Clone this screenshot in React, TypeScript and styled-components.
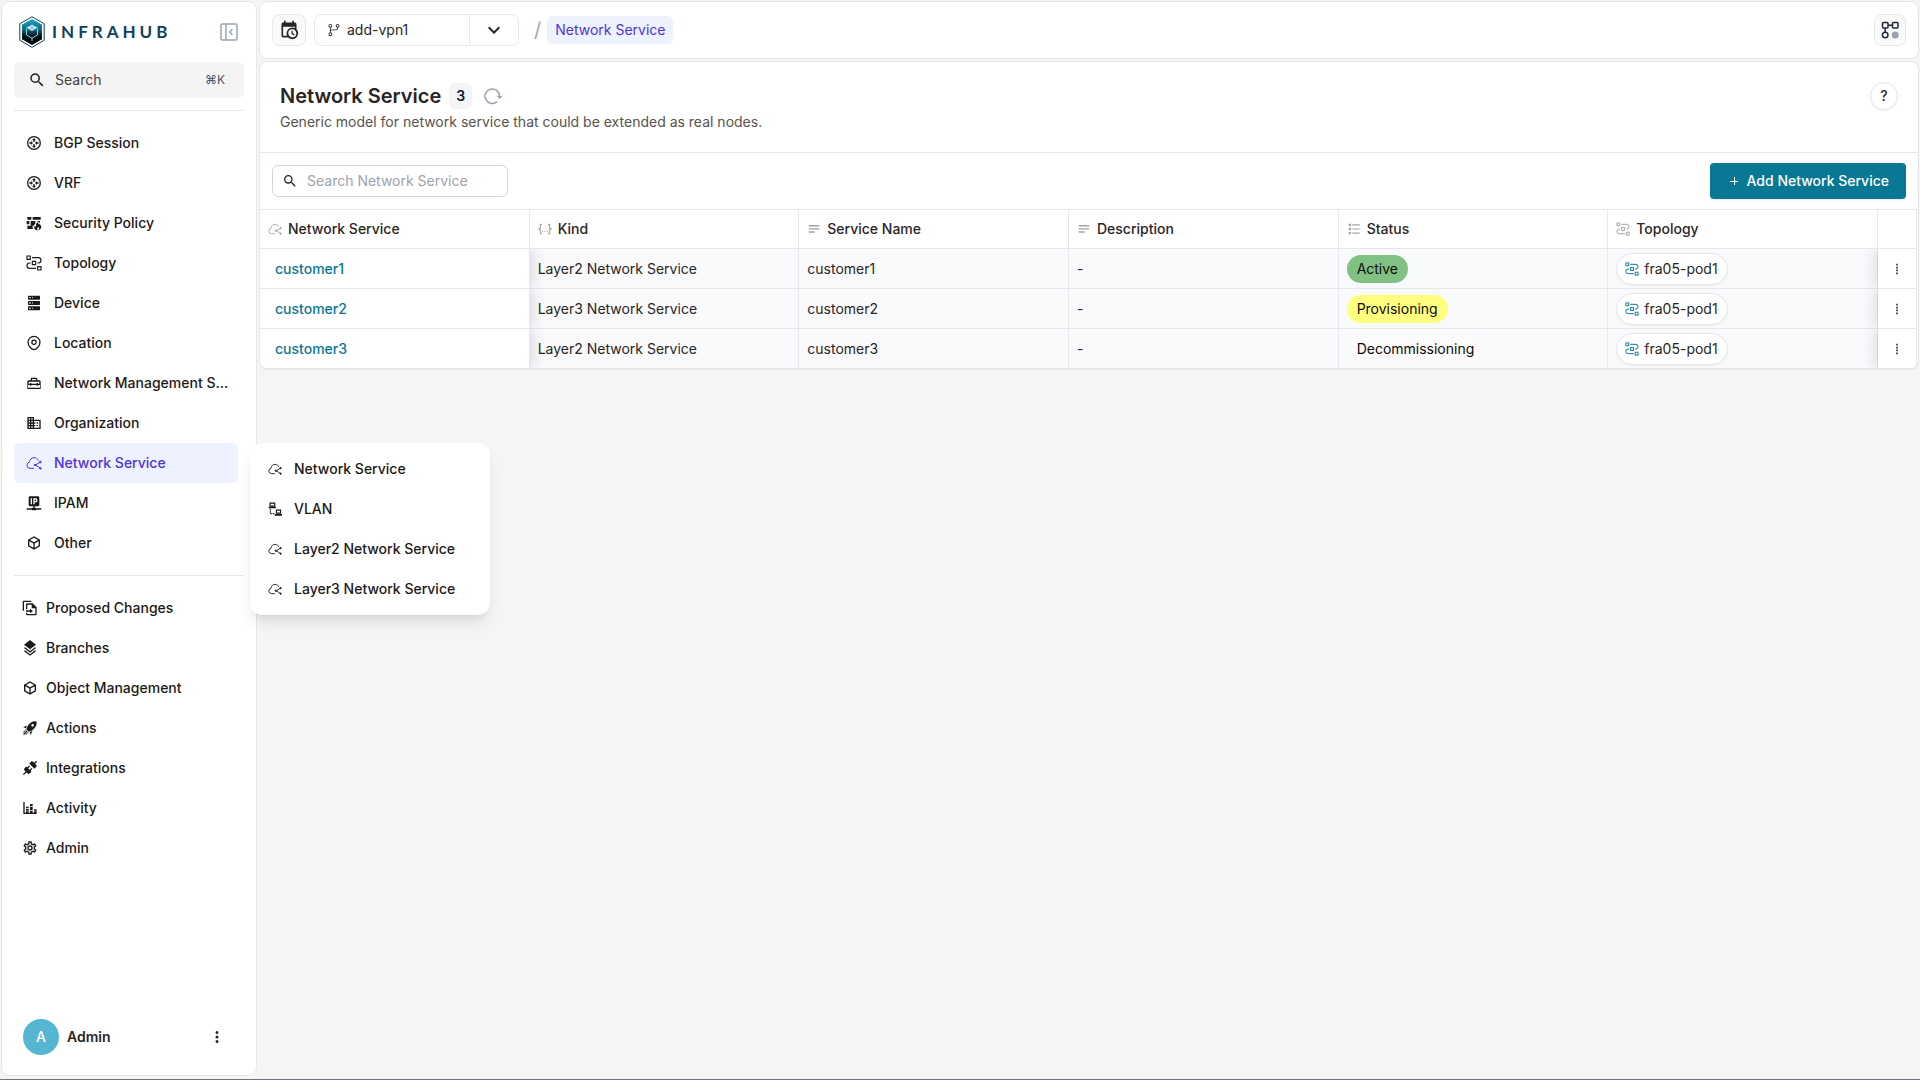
import React from "react";
import styled, { createGlobalStyle, css } from "styled-components";
import { GoGitBranch } from "react-icons/go";

const color = {
  page: "#f5f5f4",
  line: "#e5e7eb",
  ink: "#1c1917",
  text: "#292524",
  muted: "#9ca3af",
  accent: "#4f32e0",
  accentSoft: "#eef2ff",
  teal: "#087895",
};

const GlobalStyle = createGlobalStyle`
  *, *::before, *::after { box-sizing: border-box; }
  html, body, #root { height: 100%; }
  body {
    margin: 0;
    background: ${color.page};
    color: ${color.text};
    font: 400 14px/20px Inter, "Noto Sans", sans-serif;
  }
  button, input { font: inherit; color: inherit; }
  button { padding: 0; cursor: pointer; }
  a { color: inherit; text-decoration: none; }
  ul { list-style: none; margin: 0; padding: 0; }
  h1, p { margin: 0; }
`;

/* ---------- icons ---------- */

const Glyph = styled.svg<{ $size?: number }>`
  display: block;
  flex: none;
  width: ${(p) => p.$size ?? 16}px;
  height: ${(p) => p.$size ?? 16}px;
`;

type IconProps = { size?: number };

const solid = (d: string) =>
  function SolidIcon({ size }: IconProps) {
    return (
      <Glyph $size={size} viewBox="0 0 24 24" fill="currentColor" aria-hidden="true">
        <path d={d} fillRule="evenodd" />
      </Glyph>
    );
  };

const SearchIcon = solid(
  "M9.5 3A6.5 6.5 0 0 1 16 9.5c0 1.61-.59 3.09-1.56 4.23l.27.27h.79l5 5-1.5 1.5-5-5v-.79l-.27-.27A6.516 6.516 0 0 1 9.5 16 6.5 6.5 0 0 1 3 9.5 6.5 6.5 0 0 1 9.5 3m0 2C7 5 5 7 5 9.5S7 14 9.5 14 14 12 14 9.5 12 5 9.5 5"
);
const ChevronDownIcon = solid("M7.41 8.58 12 13.17l4.59-4.59L18 10l-6 6-6-6z");
const CubeIcon = solid(
  "M21 16.5c0 .38-.21.71-.53.88l-7.9 4.44c-.16.12-.36.18-.57.18s-.41-.06-.57-.18l-7.9-4.44A.99.99 0 0 1 3 16.5v-9c0-.38.21-.71.53-.88l7.9-4.44c.16-.12.36-.18.57-.18s.41.06.57.18l7.9 4.44c.32.17.53.5.53.88zM12 4.15 6.04 7.5 12 10.85l5.96-3.35zM5 15.91l6 3.38v-6.71L5 9.21zm14 0v-6.7l-6 3.37v6.71z"
);
const ServerIcon = solid(
  "M4 1h16a1 1 0 0 1 1 1v4a1 1 0 0 1-1 1H4a1 1 0 0 1-1-1V2a1 1 0 0 1 1-1m0 8h16a1 1 0 0 1 1 1v4a1 1 0 0 1-1 1H4a1 1 0 0 1-1-1v-4a1 1 0 0 1 1-1m0 8h16a1 1 0 0 1 1 1v4a1 1 0 0 1-1 1H4a1 1 0 0 1-1-1v-4a1 1 0 0 1 1-1M9 5h1V3H9zm0 8h1v-2H9zm0 8h1v-2H9zM5 3v2h2V3zm0 8v2h2v-2zm0 8v2h2v-2z"
);
const BuildingIcon = solid(
  "M18 15h-2v2h2zm0-4h-2v2h2zm2 8h-8v-2h2v-2h-2v-2h2v-2h-2V9h8zM10 7H8V5h2zm0 4H8V9h2zm0 4H8v-2h2zm0 4H8v-2h2zM6 7H4V5h2zm0 4H4V9h2zm0 4H4v-2h2zm0 4H4v-2h2zm6-12V3H2v18h20V7z"
);
const LayersIcon = solid(
  "M12 0 3 7l1.63 1.27L12 14l7.36-5.73L21 7zm7.37 10.8L12 16.54l-7.38-5.73L3 12.07l9 7 9-7zm0 4.67L12 21.2l-7.38-5.73L3 16.74l9 7 9-7z"
);
const RocketIcon = solid(
  "m13.13 22.19-1.63-3.83c1.57-.58 3.04-1.36 4.4-2.27zM5.64 12.5l-3.83-1.63 6.1-2.77C7 9.46 6.22 10.93 5.64 12.5M21.61 2.39S16.66.27 11 5.93c-2.19 2.19-3.5 4.6-4.35 6.71-.28.75-.09 1.57.46 2.13l2.13 2.12c.55.56 1.37.74 2.12.46A19.1 19.1 0 0 0 18.07 13c5.66-5.66 3.54-10.61 3.54-10.61m-7.07 7.07c-.78-.78-.78-2.05 0-2.83s2.05-.78 2.83 0c.77.78.78 2.05 0 2.83s-2.05.78-2.83 0M6.24 22l3.64-3.64c-.34-.09-.67-.24-.97-.45L4.83 22zM2 22h1.41l4.77-4.76-1.42-1.41L2 20.59zm0-2.83 4.09-4.08c-.21-.3-.36-.62-.45-.97L2 17.76z"
);
const PlugIcon = solid(
  "M21.4 7.5c.8.8.8 2.1 0 2.8l-2.8 2.8-7.8-7.8 2.8-2.8c.8-.8 2.1-.8 2.8 0l1.8 1.8 3-3 1.4 1.4-3 3zm-5.8 5.8-1.4-1.4-2.8 2.8-2.1-2.1 2.8-2.8-1.4-1.4-2.8 2.8-1.5-1.4-2.8 2.8c-.8.8-.8 2.1 0 2.8l1.8 1.8-4 4 1.4 1.4 4-4 1.8 1.8c.8.8 2.1.8 2.8 0l2.8-2.8-1.4-1.4z"
);
const ChartIcon = solid(
  "M22 21H2V3h2v16h2v-2h4v2h2v-3h4v3h2v-2h4zM18 14h4v2h-4zM12 6h4v3h-4zm4 9h-4v-5h4zM6 10h4v2H6zm4 6H6v-3h4z"
);
const CogIcon = solid(
  "M12 8a4 4 0 0 1 4 4 4 4 0 0 1-4 4 4 4 0 0 1-4-4 4 4 0 0 1 4-4m0 2a2 2 0 0 0-2 2 2 2 0 0 0 2 2 2 2 0 0 0 2-2 2 2 0 0 0-2-2m-2 12c-.25 0-.46-.18-.5-.42l-.37-2.65c-.63-.25-1.17-.59-1.69-.99l-2.49 1.01c-.22.08-.49 0-.61-.22l-2-3.46a.493.493 0 0 1 .12-.64l2.11-1.66L4.5 12l.07-1-2.11-1.63a.493.493 0 0 1-.12-.64l2-3.46c.12-.22.39-.31.61-.22l2.49 1c.52-.39 1.06-.73 1.69-.98l.37-2.65c.04-.24.25-.42.5-.42h4c.25 0 .46.18.5.42l.37 2.65c.63.25 1.17.59 1.69.98l2.49-1c.22-.09.49 0 .61.22l2 3.46c.13.22.07.49-.12.64L19.43 11l.07 1-.07 1 2.11 1.63c.19.15.25.42.12.64l-2 3.46c-.12.22-.39.31-.61.22l-2.49-1c-.52.39-1.06.73-1.69.98l-.37 2.65c-.04.24-.25.42-.5.42zm1.25-18-.37 2.61c-1.2.25-2.26.89-3.03 1.78L5.44 7.35l-.75 1.3L6.8 10.2a5.55 5.55 0 0 0 0 3.6l-2.12 1.56.75 1.3 2.43-1.04c.77.88 1.82 1.52 3.01 1.76l.37 2.62h1.52l.37-2.61c1.19-.25 2.24-.89 3.01-1.77l2.43 1.04.75-1.3-2.12-1.55c.4-1.17.4-2.44 0-3.61l2.11-1.55-.75-1.3-2.41 1.04a5.42 5.42 0 0 0-3.03-1.77L12.75 4z"
);
const CalendarClockIcon = solid(
  "M15 13h1.5v2.82l2.44 1.41-.75 1.3L15 16.69zm4-5H5v11h4.67c-.43-.91-.67-1.93-.67-3a7 7 0 0 1 7-7c1.07 0 2.09.24 3 .67zM5 21a2 2 0 0 1-2-2V5c0-1.11.89-2 2-2h1V1h2v2h8V1h2v2h1a2 2 0 0 1 2 2v6.1c1.24 1.26 2 2.99 2 4.9a7 7 0 0 1-7 7c-1.91 0-3.64-.76-4.9-2zm11-9.85A4.85 4.85 0 0 0 11.15 16c0 2.68 2.17 4.85 4.85 4.85A4.85 4.85 0 0 0 20.85 16c0-2.68-2.17-4.85-4.85-4.85"
);
const JsonIcon = solid(
  "M5 3h2v2H5v5a2 2 0 0 1-2 2 2 2 0 0 1 2 2v5h2v2H5c-1.07-.27-2-.9-2-2v-4a2 2 0 0 0-2-2H0v-2h1a2 2 0 0 0 2-2V5a2 2 0 0 1 2-2m14 0a2 2 0 0 1 2 2v4a2 2 0 0 0 2 2h1v2h-1a2 2 0 0 0-2 2v4a2 2 0 0 1-2 2h-2v-2h2v-5a2 2 0 0 1 2-2 2 2 0 0 1-2-2V5h-2V3zm-7 12a1 1 0 1 1 0 2 1 1 0 0 1 0-2m-4 0a1 1 0 1 1 0 2 1 1 0 0 1 0-2m8 0a1 1 0 1 1 0 2 1 1 0 0 1 0-2"
);
const TextIcon = solid("M3 5h18v2.5H3zM3 10.500h18V13H3zM3 16h10v2.500H3z");
const ListIcon = solid(
  "M3 3h4v4H3zM3 10h4v4H3zM3 17h4v4H3zM9 4h13v2H9zM9 11h13v2H9zM9 18h13v2H9z"
);
const DotsIcon = solid(
  "M12 16a2 2 0 1 1 0 4 2 2 0 0 1 0-4m0-6a2 2 0 1 1 0 4 2 2 0 0 1 0-4m0-6a2 2 0 1 1 0 4 2 2 0 0 1 0-4"
);
const SmallDotsIcon = solid(
  "M10.500 3h3v3h-3zM10.500 8h3v3h-3zM10.500 13h3v3h-3zM10.500 18h3v3h-3z"
);
const ToolboxIcon = solid(
  "M18 16h-2v-1H8v1H6v-1H3v4h18v-4h-3zM20 8h-3V6c0-1.100-.9-2-2-2H9c-1.100 0-2 .9-2 2v2H4c-1.100 0-2 .9-2 2v11h20V10c0-1.100-.9-2-2-2M9 6h6v2H9zm11 4v3h-2v-1h-2v1H8v-1H6v1H4v-3z"
);
const IpIcon = solid(
  "M6 2h12a2 2 0 0 1 2 2v11a2 2 0 0 1-2 2h-5v2h1a1 1 0 0 1 1 1h8v2h-8a1 1 0 0 1-1 1h-4a1 1 0 0 1-1-1H1v-2h8a1 1 0 0 1 1-1h1v-2H6a2 2 0 0 1-2-2V4a2 2 0 0 1 2-2m1 3v9h2V5zm4 0v9h2v-3h2a2 2 0 0 0 2-2V7a2 2 0 0 0-2-2zm2 2h2v2h-2z"
);
const FileReplaceIcon = solid(
  "M3 1h11v2H3v13H1V3a2 2 0 0 1 2-2M8 5h8l6 6v10a2 2 0 0 1-2 2H8a2 2 0 0 1-2-2v-2h2v2h12v-8.500h-5.500V7H8v7H6V7a2 2 0 0 1 2-2M12 13l4.500 3.500L12 20v-2.500H6v-2h6z"
);
const WallFireIcon = solid(
  "M2 3h6v4H2zM10 3h12v4H10zM1 9h4v5H1zM7 9h7v4c-1 1-2 2-2.500 3H7zM16 9h5v3l-3-2zM2 16h8c-.5 2 0 4 1 5H2zM17.500 10.500c.4 2.200 2.300 2.700 4 4.300 3 3 .6 8.200-4 8.200-4.500 0-6.500-3.500-4.500-7 .4 1 1 1.500 2 1.700-.4-3 .5-5.700 2.500-7.200m1 7c-.2 1.200-2 1.700-2 3 0 1 .7 1.500 1.500 1.500 2.200 0 2.500-2.700.5-4.500"
);

const RouterIcon = ({ size }: IconProps) => (
  <Glyph $size={size} viewBox="0 0 24 24" aria-hidden="true">
    <circle cx="12" cy="12" r="9.500" fill="none" stroke="currentColor" strokeWidth="1.900" />
    <path
      fill="currentColor"
      d="m12 4.500 3 3.500h-2v2.500h-2V8H9zM12 19.500 9 16h2v-2.500h2V16h2zM10.500 12 7.500 9v2H5v2h2.500v2zM13.500 12l3-3v2H19v2h-2.500v2z"
    />
  </Glyph>
);

const TopologyIcon = ({ size }: IconProps) => (
  <Glyph $size={size} viewBox="0 0 24 24" fill="none" stroke="currentColor" strokeWidth="1.700" aria-hidden="true">
    <path d="M1.500 1.500h5v5h-5zM9.500 9.500h5v5h-5zM17.500 17.500h5v5h-5z" />
    <path d="M9 4h9.500a4 4 0 0 1 0 8H17M7 12H5.500a4 4 0 0 0 0 8H15" />
  </Glyph>
);

const CloudIcon = ({ size }: IconProps) => (
  <Glyph $size={size} viewBox="0 0 24 24" fill="none" stroke="currentColor" strokeWidth="1.500" aria-hidden="true">
    <path d="M12 20H6a4.700 4.700 0 0 1-.8-9.300C5.700 6.500 8.500 4 12 4c3.200 0 5.600 1.800 6.500 4.500" />
    <path d="m21 11-7 4 7 4.500" />
    <circle cx="21.500" cy="10.500" r="1.200" fill="currentColor" />
    <circle cx="13.500" cy="15" r="1.200" fill="currentColor" />
    <circle cx="21.500" cy="20" r="1.200" fill="currentColor" />
  </Glyph>
);

const PinIcon = ({ size }: IconProps) => (
  <Glyph $size={size} viewBox="0 0 24 24" fill="none" stroke="currentColor" strokeWidth="1.900" aria-hidden="true">
    <path d="M12 22c-3 0-9-5-9-11a9 9 0 0 1 18 0c0 6-6 11-9 11z" />
    <circle cx="12" cy="11" r="3.200" />
  </Glyph>
);

const VlanIcon = ({ size }: IconProps) => (
  <Glyph $size={size} viewBox="0 0 24 24" fill="none" stroke="currentColor" strokeWidth="2" aria-hidden="true">
    <path d="M3.500 2h8v5h-8zM14.500 14h7v5h-7z" />
    <path d="M1 9.500h12.500M11.500 22H24" strokeWidth="2.800" />
    <path d="M4 12v8h7" strokeDasharray="2.500 1.500" />
  </Glyph>
);

const ReloadIcon = ({ size }: IconProps) => (
  <Glyph $size={size} viewBox="0 0 24 24" fill="none" stroke="currentColor" strokeWidth="2" aria-hidden="true">
    <path d="M17.500 19.500A9.700 9.700 0 1 1 20.700 12" />
    <path d="M17 12h7.500l-3.700 4z" fill="currentColor" stroke="none" />
  </Glyph>
);

const PanelIcon = ({ size }: IconProps) => (
  <Glyph $size={size} viewBox="0 0 18 18" fill="none" stroke="currentColor" strokeWidth="1.500" aria-hidden="true">
    <rect x="1" y="1" width="16" height="16" rx="1.500" />
    <path d="M6 1v16M12.500 6.300 9.800 9l2.700 2.700" />
  </Glyph>
);

const PlusIcon = ({ size }: IconProps) => (
  <Glyph $size={size} viewBox="0 0 8 8" stroke="currentColor" aria-hidden="true">
    <path d="M0 4.500h8M4.500 0v8" />
  </Glyph>
);

const SchemaIcon = ({ size }: IconProps) => (
  <Glyph $size={size} viewBox="0 0 18 18" fill="none" stroke="#1f2937" strokeWidth="1.500" aria-hidden="true">
    <rect x="1.500" y="1.500" width="5.500" height="5.500" rx="1" />
    <rect x="11.500" y="1.500" width="5.500" height="5.500" rx="1" />
    <circle cx="4.200" cy="14" r="2.800" />
    <path d="M7 4.200h4.500M4.200 7v4" />
    <circle cx="14.200" cy="14" r="3.500" fill="#9ca3af" stroke="none" />
  </Glyph>
);

const LogoSvg = styled.svg`
  display: block;
  flex: none;
  width: 26px;
  height: 32px;
`;

const LogoMark = () => (
  <LogoSvg viewBox="0 0 26 32" aria-hidden="true">
    <defs>
      <linearGradient id="hex" x1="0" y1="0" x2="0" y2="1">
        <stop offset="0" stopColor="#1aa3c6" />
        <stop offset=".4" stopColor="#0d6c89" />
        <stop offset=".65" stopColor="#04151c" />
        <stop offset="1" stopColor="#000" />
      </linearGradient>
    </defs>
    <path d="M13 .7 25.200 7.800v16.400L13 31.300.8 24.200V7.800z" fill="#fff" stroke="#0f4257" strokeWidth="1" />
    <path d="M13 3 23 8.800v14.400L13 29 3 23.200V8.800z" fill="url(#hex)" />
    <path d="M7.500 12.500v6.500l5.500 3.200 5.500-3.200v-6.500" fill="none" stroke="#9fd0dc" strokeWidth="1" />
    <path d="m13 8.800 5.500 2.800L13 15l-5.500-3.400z" fill="#eaf7fa" />
    <path d="M13 8.800V15M10 10.300l6 3M16 10.300l-6 3" stroke="#4fb2ca" strokeWidth=".6" />
    <path d="M13 22.200v3" stroke="#9fd0dc" strokeWidth="1" />
  </LogoSvg>
);

/* ---------- shell ---------- */

const Shell = styled.div`
  display: flex;
  gap: 2px;
  min-height: 100vh;
  padding: 1px 1px 3px;
  border-bottom: 1px solid #6b7680;
`;

const panel = css`
  background: #fff;
  border: 1px solid ${color.line};
  border-radius: 8px;
`;

const Sidebar = styled.aside`
  ${panel}
  display: flex;
  flex-direction: column;
  flex: none;
  width: 256px;
  padding: 12px;
`;

const Main = styled.main`
  display: flex;
  flex-direction: column;
  flex: 1;
  gap: 2px;
  min-width: 0;
`;

/* ---------- sidebar ---------- */

const Brand = styled.div`
  display: flex;
  align-items: center;
  justify-content: space-between;
  height: 36px;
  padding: 0 6px 0 5px;
`;

const BrandLink = styled.a`
  display: flex;
  align-items: center;
  gap: 7px;
  color: #0f4257;
  font-family: Lato, Inter, sans-serif;
  font-weight: 700;
  font-size: 17px;
  letter-spacing: 4px;
`;

const PlainButton = styled.button`
  display: grid;
  place-items: center;
  border: 0;
  background: none;
  color: ${(p) => p.color ?? "inherit"};
`;

const SearchButton = styled.button`
  display: flex;
  align-items: center;
  gap: 9px;
  height: 36px;
  margin-top: 12px;
  padding: 0 14px;
  border: 0;
  border-radius: 6px;
  background: #f4f4f4;
  color: #404040;
  text-align: left;

  svg { color: ${color.text}; }
`;

const Shortcut = styled.kbd`
  margin-left: auto;
  padding: 0 5px;
  border-radius: 4px;
  background: #f3f4f6;
  color: #4b5563;
  font: 400 12px/20px Inter, "DejaVu Sans", sans-serif;
`;

const Rule = styled.hr`
  width: 100%;
  height: 1px;
  margin: 12px 0;
  border: 0;
  background: ${color.line};
`;

const NavItem = styled.li`
  position: relative;
`;

const NavLink = styled.a<{ $active?: boolean; $compact?: boolean }>`
  display: flex;
  align-items: center;
  gap: ${(p) => (p.$compact ? 8 : 12)}px;
  height: 40px;
  margin-right: 6px;
  padding: 0 8px 0 ${(p) => (p.$compact ? 8 : 12)}px;
  border-radius: 6px;
  font-weight: 500;
  white-space: nowrap;
  color: ${(p) => (p.$active ? color.accent : color.ink)};
  background: ${(p) => (p.$active ? color.accentSoft : "transparent")};
`;

const Flyout = styled.ul`
  position: absolute;
  z-index: 2;
  top: 0;
  left: 236px;
  width: 240px;
  padding: 6px;
  border-radius: 12px;
  background: #fff;
  box-shadow: 0 10px 15px -3px rgba(0, 0, 0, 0.1), 0 4px 6px -4px rgba(0, 0, 0, 0.1);
`;

const Account = styled.div`
  display: flex;
  align-items: center;
  gap: 8px;
  margin-top: auto;
  padding: 8px 9px;
  font-weight: 600;
`;

const Avatar = styled.span`
  display: grid;
  place-items: center;
  width: 36px;
  height: 36px;
  border-radius: 50%;
  background: #54b6d0;
  color: #fff;
  font-weight: 500;
`;

const AccountMenu = styled(PlainButton)`
  margin-left: auto;
  margin-right: 9px;
`;

/* ---------- top bar ---------- */

const TopBar = styled.header`
  ${panel}
  display: flex;
  align-items: center;
  height: 58px;
  padding: 0 12px;
`;

const SquareButton = styled.button`
  display: grid;
  place-items: center;
  min-width: 32px;
  height: 32px;
  padding: 0 6px;
  border: 1px solid ${color.line};
  border-radius: 8px;
  background: #fafafa;
`;

const BranchPicker = styled.div`
  display: flex;
  height: 32px;
  margin-left: 8px;
  border: 1px solid ${color.line};
  border-radius: 8px;
  overflow: hidden;
`;

const BranchName = styled.button`
  display: flex;
  align-items: center;
  gap: 6px;
  width: 155px;
  padding: 0 12px;
  border: 0;
  border-right: 1px solid ${color.line};
  background: #fff;
`;

const BranchToggle = styled.button`
  display: grid;
  place-items: center;
  width: 48px;
  border: 0;
  background: #fff;
`;

const Crumbs = styled.nav`
  display: flex;
  align-items: center;
  gap: 6px;
  margin-left: 15px;
`;

const Slash = styled.span`
  color: ${color.muted};
  font-size: 20px;
`;

const Crumb = styled.a`
  padding: 4px 8px;
  border-radius: 6px;
  background: ${color.accentSoft};
  color: ${color.accent};
`;

const End = styled.div`
  margin-left: auto;
`;

/* ---------- content card ---------- */

const Card = styled.section`
  ${panel}
  border-bottom-width: 2px;
  overflow: hidden;
`;

const TitleBar = styled.div`
  display: flex;
  align-items: flex-start;
  justify-content: space-between;
  padding: 20px;
  border-bottom: 1px solid ${color.line};
`;

const TitleRow = styled.div`
  display: flex;
  align-items: center;
  gap: 8px;
  height: 28px;
`;

const Title = styled.h1`
  font-size: 20px;
  line-height: 28px;
  font-weight: 600;
`;

const Count = styled.span`
  padding: 3px 7px;
  border-radius: 6px;
  background: #f3f4f6;
  color: #111827;
  font-weight: 600;
`;

const Refresh = styled(PlainButton)`
  margin-left: 4px;
`;

const Subtitle = styled.p`
  height: 22px;
  padding-top: 2px;
  color: #57534e;
`;

const HelpButton = styled.button`
  width: 28px;
  height: 28px;
  border: 1px solid ${color.line};
  border-radius: 50%;
  background: #fff;
  box-shadow: 0 1px 2px rgba(0, 0, 0, 0.05);
  font-weight: 500;
`;

const Toolbar = styled.div`
  display: flex;
  align-items: center;
  justify-content: space-between;
  height: 56px;
  padding: 0 12px;
`;

const SearchField = styled.label`
  display: flex;
  align-items: center;
  gap: 9px;
  width: 236px;
  height: 32px;
  padding: 0 9px;
  border: 1px solid #cfd5de;
  border-radius: 6px;
`;

const SearchInput = styled.input`
  flex: 1;
  min-width: 0;
  padding: 0;
  border: 0;
  outline: 0;
  background: none;

  &::placeholder { color: ${color.muted}; opacity: 1; }
`;

const AddButton = styled.button`
  display: flex;
  align-items: center;
  gap: 9px;
  height: 36px;
  padding: 0 17px 0 20px;
  border: 0;
  border-radius: 4px;
  background: ${color.teal};
  color: #fff;
  font-weight: 500;
  box-shadow: 0 1px 2px rgba(0, 0, 0, 0.1);
`;

/* ---------- table ---------- */

const TableWrap = styled.div`
  padding-right: 1px;
`;

const Table = styled.table`
  width: 100%;
  border-collapse: separate;
  border-spacing: 0;
  table-layout: fixed;
`;

const ActionsCol = styled.col`
  width: 39px;
`;

const Th = styled.th`
  height: 40px;
  padding: 0 8px;
  border: solid ${color.line};
  border-width: 1px 1px 1px 0;
  font-weight: 500;
  text-align: left;
`;

const ThLabel = styled.span`
  display: flex;
  align-items: center;
  gap: 6px;

  svg { color: #a8a29e; }
`;

const Td = styled.td<{ $pinned?: "start" | "end" }>`
  position: relative;
  height: 40px;
  padding: 0 8px;
  border-right: 1px solid ${color.line};
  border-bottom: 1px solid ${color.line};
  background: #f9fafc;

  tr:last-child > & { border-bottom: 0; height: 39px; }

  ${(p) =>
    p.$pinned &&
    css`
      z-index: 1;
      background: #fff;
      box-shadow: ${p.$pinned === "start" ? "4px" : "-4px"} 0 12px rgba(15, 23, 42, 0.12);
      clip-path: ${p.$pinned === "start" ? "inset(0 -16px 0 0)" : "inset(0 0 0 -16px)"};
    `}
`;

const RowLink = styled.a`
  padding-left: 7px;
  color: ${color.teal};
  font-weight: 500;
`;

const Status = styled.span<{ $tone: string }>`
  display: inline-block;
  padding: 4px 10px;
  border-radius: 14px;
  background: ${(p) => p.$tone};
  color: #0c0a09;
`;

const Chip = styled.a`
  display: inline-flex;
  align-items: center;
  gap: 5px;
  height: 32px;
  padding: 0 9px 0 8px;
  border: 1px solid ${color.line};
  border-radius: 16px;
  background: #fff;
  box-shadow: 0 1px 2px rgba(0, 0, 0, 0.06);
  vertical-align: middle;

  svg { color: ${color.teal}; }
`;

const RowMenu = styled(PlainButton)`
  margin: 0 auto;
  color: #374151;
`;

/* ---------- data ---------- */

type Entry = { label: string; Icon: React.ComponentType<IconProps> };

const serviceMenu: Entry[] = [
  { label: "Network Service", Icon: CloudIcon },
  { label: "VLAN", Icon: VlanIcon },
  { label: "Layer2 Network Service", Icon: CloudIcon },
  { label: "Layer3 Network Service", Icon: CloudIcon },
];

const schemaNav: (Entry & { children?: Entry[] })[] = [
  { label: "BGP Session", Icon: RouterIcon },
  { label: "VRF", Icon: RouterIcon },
  { label: "Security Policy", Icon: WallFireIcon },
  { label: "Topology", Icon: TopologyIcon },
  { label: "Device", Icon: ServerIcon },
  { label: "Location", Icon: PinIcon },
  { label: "Network Management S...", Icon: ToolboxIcon },
  { label: "Organization", Icon: BuildingIcon },
  { label: "Network Service", Icon: CloudIcon, children: serviceMenu },
  { label: "IPAM", Icon: IpIcon },
  { label: "Other", Icon: CubeIcon },
];

const toolNav: Entry[] = [
  { label: "Proposed Changes", Icon: FileReplaceIcon },
  { label: "Branches", Icon: LayersIcon },
  { label: "Object Management", Icon: CubeIcon },
  { label: "Actions", Icon: RocketIcon },
  { label: "Integrations", Icon: PlugIcon },
  { label: "Activity", Icon: ChartIcon },
  { label: "Admin", Icon: CogIcon },
];

const columns: Entry[] = [
  { label: "Network Service", Icon: CloudIcon },
  { label: "Kind", Icon: JsonIcon },
  { label: "Service Name", Icon: TextIcon },
  { label: "Description", Icon: TextIcon },
  { label: "Status", Icon: ListIcon },
  { label: "Topology", Icon: TopologyIcon },
];

const rows = [
  { name: "customer1", kind: "Layer2 Network Service", status: "Active", tone: "#81c183" },
  { name: "customer2", kind: "Layer3 Network Service", status: "Provisioning", tone: "#ffff7f" },
  { name: "customer3", kind: "Layer2 Network Service", status: "Decommissioning", tone: "#fbfbfb" },
];

export default function App() {
  return (
    <>
      <GlobalStyle />
      <Shell>
        <Sidebar>
          <Brand>
            <BrandLink href="#">
              <LogoMark />
              INFRAHUB
            </BrandLink>
            <PlainButton aria-label="Collapse sidebar" color={color.muted}>
              <PanelIcon size={18} />
            </PlainButton>
          </Brand>
          <SearchButton>
            <SearchIcon size={18} />
            Search
            <Shortcut>⌘K</Shortcut>
          </SearchButton>
          <Rule />
          <ul>
            {schemaNav.map(({ label, Icon, children }) => (
              <NavItem key={label}>
                <NavLink href="#" $active={!!children}>
                  <Icon size={16} />
                  {label}
                </NavLink>
                {children && (
                  <Flyout>
                    {children.map((child) => (
                      <li key={child.label}>
                        <NavLink href="#">
                          <child.Icon size={14} />
                          {child.label}
                        </NavLink>
                      </li>
                    ))}
                  </Flyout>
                )}
              </NavItem>
            ))}
          </ul>
          <Rule />
          <ul>
            {toolNav.map(({ label, Icon }) => (
              <NavItem key={label}>
                <NavLink href="#" $compact>
                  <Icon size={16} />
                  {label}
                </NavLink>
              </NavItem>
            ))}
          </ul>
          <Account>
            <Avatar>A</Avatar>
            Admin
            <AccountMenu aria-label="Account menu">
              <DotsIcon size={18} />
            </AccountMenu>
          </Account>
        </Sidebar>

        <Main>
          <TopBar>
            <SquareButton aria-label="Select date">
              <CalendarClockIcon size={20} />
            </SquareButton>
            <BranchPicker>
              <BranchName>
                <GoGitBranch size={14} />
                add-vpn1
              </BranchName>
              <BranchToggle aria-label="Change branch">
                <ChevronDownIcon size={24} />
              </BranchToggle>
            </BranchPicker>
            <Crumbs aria-label="Breadcrumb">
              <Slash>/</Slash>
              <Crumb href="#">Network Service</Crumb>
            </Crumbs>
            <End>
              <SquareButton aria-label="Schema view">
                <SchemaIcon size={18} />
              </SquareButton>
            </End>
          </TopBar>

          <Card>
            <TitleBar>
              <div>
                <TitleRow>
                  <Title>Network Service</Title>
                  <Count>3</Count>
                  <Refresh aria-label="Refresh" color={color.muted}>
                    <ReloadIcon size={18} />
                  </Refresh>
                </TitleRow>
                <Subtitle>Generic model for network service that could be extended as real nodes.</Subtitle>
              </div>
              <HelpButton aria-label="Help">?</HelpButton>
            </TitleBar>
            <Toolbar>
              <SearchField>
                <SearchIcon size={16} />
                <SearchInput type="text" aria-label="Search Network Service" placeholder="Search Network Service" />
              </SearchField>
              <AddButton>
                <PlusIcon size={8} />
                Add Network Service
              </AddButton>
            </Toolbar>
            <TableWrap>
              <Table>
                <colgroup>
                  {columns.map((c) => (
                    <col key={c.label} />
                  ))}
                  <ActionsCol />
                </colgroup>
                <thead>
                  <tr>
                    {columns.map(({ label, Icon }) => (
                      <Th key={label} scope="col">
                        <ThLabel>
                          <Icon size={14} />
                          {label}
                        </ThLabel>
                      </Th>
                    ))}
                    <Th aria-label="Row actions" />
                  </tr>
                </thead>
                <tbody>
                  {rows.map((r) => (
                    <tr key={r.name}>
                      <Td $pinned="start">
                        <RowLink href="#">{r.name}</RowLink>
                      </Td>
                      <Td>{r.kind}</Td>
                      <Td>{r.name}</Td>
                      <Td>-</Td>
                      <Td>
                        <Status $tone={r.tone}>{r.status}</Status>
                      </Td>
                      <Td>
                        <Chip href="#">
                          <TopologyIcon size={14} />
                          fra05-pod1
                        </Chip>
                      </Td>
                      <Td $pinned="end">
                        <RowMenu aria-label={`Actions for ${r.name}`}>
                          <SmallDotsIcon size={14} />
                        </RowMenu>
                      </Td>
                    </tr>
                  ))}
                </tbody>
              </Table>
            </TableWrap>
          </Card>
        </Main>
      </Shell>
    </>
  );
}
